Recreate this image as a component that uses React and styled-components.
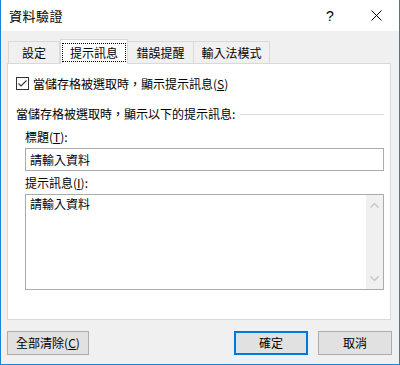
import React from 'react';
import styled, { createGlobalStyle } from 'styled-components';

const GlobalStyle = createGlobalStyle`
  body {
    margin: 0;
    background: #ffffff;
    font-family: "Noto Sans CJK TC", "Noto Sans", sans-serif;
    font-size: 12px;
    color: #000;
  }
`;

const Window = styled.div`
  width: 400px;
  height: 365px;
  box-sizing: border-box;
  border: 1px solid #1883d7;
  border-top: none;
  background: #f0f0f0;
  display: flex;
  flex-direction: column;
`;

const TitleBar = styled.div`
  height: 31px;
  background: #ffffff;
  display: flex;
  align-items: center;
`;

const Title = styled.div`
  flex: 1;
  padding-left: 8px;
  font-size: 13px;
  letter-spacing: 0.5px;
  line-height: 31px;
`;

const CaptionButton = styled.div`
  width: 46px;
  height: 31px;
  display: flex;
  align-items: center;
  justify-content: center;
  font-family: "Liberation Sans", sans-serif;
  font-size: 14px;
`;

const Body = styled.div`
  flex: 1;
  padding: 8px 8px 9px 6px;
  display: flex;
  flex-direction: column;
`;

const TabStrip = styled.div`
  height: 24px;
  padding-left: 1px;
  display: flex;
  align-items: flex-end;
`;

const Tab = styled.div`
  width: ${(p) => p.$width}px;
  height: ${(p) => (p.$active ? 25 : 22)}px;
  box-sizing: border-box;
  border: 1px solid #d9d9d9;
  border-bottom: none;
  ${(p) => (p.$joined ? 'border-left: none;' : '')}
  background: ${(p) => (p.$active ? '#ffffff' : '#f0f0f0')};
  margin-bottom: ${(p) => (p.$active ? -1 : 0)}px;
  position: relative;
  z-index: ${(p) => (p.$active ? 1 : 0)};
  display: flex;
  justify-content: center;
  align-items: ${(p) => (p.$active ? 'flex-start' : 'center')};
  padding-top: ${(p) => (p.$active ? 3 : 0)}px;
  line-height: 17px;
`;

const FocusLabel = styled.span`
  display: inline-block;
  border: 1px dotted #000;
  padding: 0 7px;
  line-height: 17px;
`;

const Panel = styled.div`
  height: 257px;
  box-sizing: border-box;
  border: 1px solid #d9d9d9;
  background: #ffffff;
  padding: 0 6px 0 8px;
  display: flex;
  flex-direction: column;
`;

const CheckRow = styled.div`
  margin-top: 13px;
  height: 13px;
  display: flex;
  align-items: center;
  gap: 4px;
  line-height: 16px;
  white-space: nowrap;
`;

const GroupHead = styled.div`
  margin-top: 16px;
  height: 16px;
  display: flex;
  align-items: center;
  line-height: 16px;
  white-space: nowrap;
`;

const Rule = styled.div`
  flex: 1;
  height: 1px;
  margin-left: 5px;
  background: #dcdcdc;
`;

const Fields = styled.div`
  padding-left: 9px;
  display: flex;
  flex-direction: column;
`;

const FieldLabel = styled.div`
  margin-top: ${(p) => p.$gap}px;
  line-height: 16px;
`;

const TextBox = styled.div`
  margin-top: 3px;
  height: 23px;
  box-sizing: border-box;
  border: 1px solid #ababab;
  padding-left: 4px;
  line-height: 21px;
`;

const MemoBox = styled.div`
  margin-top: 3px;
  height: 96px;
  box-sizing: border-box;
  border: 1px solid #ababab;
  display: flex;
`;

const MemoText = styled.div`
  flex: 1;
  padding: 1px 0 0 4px;
  line-height: 16px;
`;

const ScrollBar = styled.div`
  width: 17px;
  background: #f0f0f0;
  display: flex;
  flex-direction: column;
  justify-content: space-between;
  align-items: center;
  padding: 8px 0;
`;

const Footer = styled.div`
  margin-top: 11px;
  margin-right: -1px;
  height: 24px;
  display: flex;
`;

const Button = styled.div`
  width: ${(p) => p.$width}px;
  margin-left: ${(p) => p.$offset || 0}px;
  box-sizing: border-box;
  border: ${(p) => (p.$default ? '2px solid #0078d7' : '1px solid #adadad')};
  background: #e1e1e1;
  display: flex;
  align-items: center;
  justify-content: center;
  line-height: 16px;
`;

const Spacer = styled.div`
  flex: 1;
`;

function CheckBox() {
  return (
    <svg width="13" height="13" viewBox="0 0 13 13">
      <rect x="0.5" y="0.5" width="12" height="12" fill="#fff" stroke="#333" />
      <polyline points="2.5,6.5 5,9 10.5,3.5" fill="none" stroke="#333" strokeWidth="1.1" />
    </svg>
  );
}

function Chevron({ down }) {
  return (
    <svg width="9" height="5" viewBox="0 0 9 5">
      <polyline
        points={down ? '0.5,0.5 4.5,4.5 8.5,0.5' : '0.5,4.5 4.5,0.5 8.5,4.5'}
        fill="none"
        stroke="#c2c2c2"
        strokeWidth="1.2"
      />
    </svg>
  );
}

const tabs = [
  { label: '設定', width: 52 },
  { label: '提示訊息', width: 68, active: true },
  { label: '錯誤提醒', width: 66, joined: true },
  { label: '輸入法模式', width: 76, joined: true },
];

export default function App() {
  return (
    <>
      <GlobalStyle />
      <Window>
        <TitleBar>
          <Title>資料驗證</Title>
          <CaptionButton>?</CaptionButton>
          <CaptionButton>
            <svg width="11" height="11" viewBox="0 0 11 11">
              <path d="M0.5 0.5 L10.5 10.5 M10.5 0.5 L0.5 10.5" stroke="#000" strokeWidth="1" />
            </svg>
          </CaptionButton>
        </TitleBar>
        <Body>
          <TabStrip>
            {tabs.map((t) => (
              <Tab key={t.label} $width={t.width} $active={t.active} $joined={t.joined}>
                {t.active ? <FocusLabel>{t.label}</FocusLabel> : t.label}
              </Tab>
            ))}
          </TabStrip>
          <Panel>
            <CheckRow>
              <CheckBox />
              <span>
                當儲存格被選取時，顯示提示訊息(<u>S</u>)
              </span>
            </CheckRow>
            <GroupHead>
              當儲存格被選取時，顯示以下的提示訊息:
              <Rule />
            </GroupHead>
            <Fields>
              <FieldLabel $gap={7}>
                標題(<u>T</u>):
              </FieldLabel>
              <TextBox>請輸入資料</TextBox>
              <FieldLabel $gap={4}>
                提示訊息(<u>I</u>):
              </FieldLabel>
              <MemoBox>
                <MemoText>請輸入資料</MemoText>
                <ScrollBar>
                  <Chevron />
                  <Chevron down />
                </ScrollBar>
              </MemoBox>
            </Fields>
          </Panel>
          <Footer>
            <Button $width={82}>
              全部清除(<u>C</u>)
            </Button>
            <Spacer />
            <Button $width={74} $default>
              確定
            </Button>
            <Button $width={74} $offset={10}>
              取消
            </Button>
          </Footer>
        </Body>
      </Window>
    </>
  );
}
